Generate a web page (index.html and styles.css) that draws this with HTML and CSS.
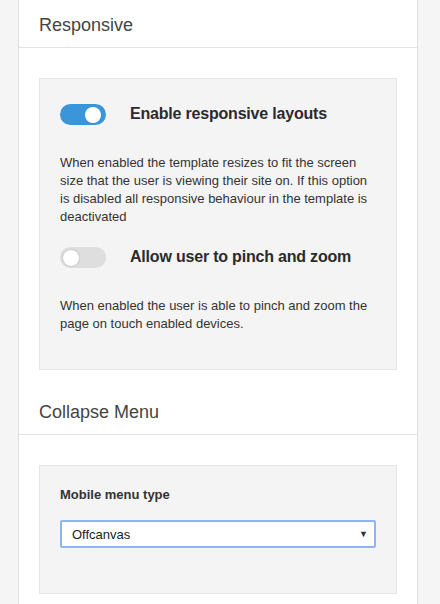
FILE: index.html
```html
<!DOCTYPE html>
<html>
<head>
<meta charset="utf-8">
<link rel="stylesheet" href="styles.css">
</head>
<body>
<div class="panel">
  <div class="section-head">Responsive</div>
  <div class="section-body">
    <div class="box box-responsive">
      <div class="option">
        <span class="toggle on"><span class="knob"></span></span>
        <span class="option-label">Enable responsive layouts</span>
      </div>
      <p class="desc">When enabled the template resizes to fit the screen size that the user is viewing their site on. If this option is disabled all responsive behaviour in the template is deactivated</p>
      <div class="option option-second">
        <span class="toggle"><span class="knob"></span></span>
        <span class="option-label">Allow user to pinch and zoom</span>
      </div>
      <p class="desc">When enabled the user is able to pinch and zoom the page on touch enabled devices.</p>
    </div>
  </div>
  <div class="section-head">Collapse Menu</div>
  <div class="section-body">
    <div class="box box-menu">
      <div class="field-label">Mobile menu type</div>
      <div class="select">
        <span class="select-value">Offcanvas</span>
        <span class="select-arrow">▼</span>
      </div>
    </div>
  </div>
</div>
</body>
</html>
```
FILE: styles.css
```css
html, body {
  margin: 0;
  padding: 0;
  background: #f5f5f5;
  font-family: "Liberation Sans", Arial, sans-serif;
  color: #333;
}
.panel {
  margin-left: 18px;
  width: 400px;
  box-sizing: border-box;
  background: #fff;
  border-left: 1px solid #e0e0e0;
  border-right: 1px solid #e0e0e0;
  min-height: 604px;
}
.section-head {
  padding: 12px 20px;
  font-size: 18px;
  line-height: 20px;
  color: #444;
  border-bottom: 1px solid #e3e3e3;
}
.section-head:first-child {
  padding-top: 15px;
}
.section-body {
  padding: 30px 20px 20px;
}
.box {
  background: #f4f4f4;
  border: 1px solid #e6e6e6;
  padding: 24px 20px 36px;
}
.option {
  display: flex;
  align-items: center;
  height: 22px;
}
.option-second {
  margin-top: 20px;
}
.toggle {
  position: relative;
  display: block;
  width: 46px;
  height: 21px;
  border-radius: 11px;
  background: #dedede;
  flex: none;
}
.toggle .knob {
  position: absolute;
  top: 3px;
  left: 3px;
  width: 16px;
  height: 16px;
  border-radius: 50%;
  background: #fff;
  box-shadow: 0 0 2px rgba(0,0,0,0.25);
}
.toggle.on {
  background: #3a95d9;
}
.toggle.on .knob {
  left: 25px;
  box-shadow: none;
}
.option-label {
  margin-left: 24px;
  font-size: 16px;
  font-weight: bold;
  letter-spacing: -0.2px;
  color: #2b2b2b;
}
.desc {
  margin: 29px 0 0;
  font-size: 13px;
  line-height: 18px;
  color: #333;
}
.box-menu {
  padding: 20px 20px 45px;
}
.field-label {
  font-size: 13px;
  font-weight: bold;
  line-height: 18px;
  color: #333;
}
.select {
  margin-top: 16px;
  height: 28px;
  box-sizing: border-box;
  background: #fff;
  border: 2px solid #8fb4f2;
  border-radius: 2px;
  display: flex;
  align-items: center;
  justify-content: space-between;
  padding: 0 6px 0 10px;
  font-size: 13px;
  color: #222;
}
.select-arrow {
  font-size: 9px;
  color: #333;
}
```
